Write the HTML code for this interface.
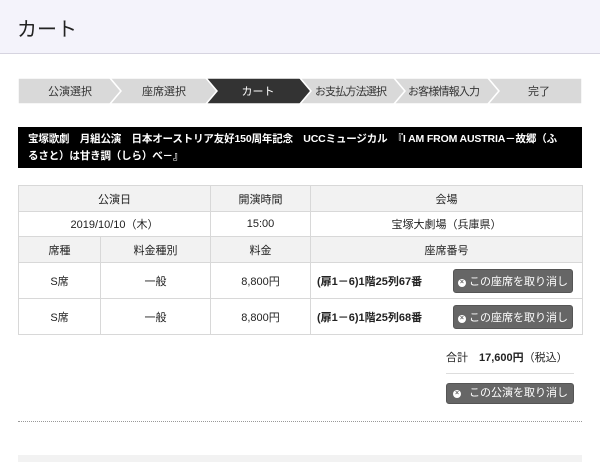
<!DOCTYPE html>
<html><head><meta charset="utf-8"><style>
body{margin:0;width:600px;height:462px;overflow:hidden;background:#fff;font-family:"Liberation Sans","Noto Sans CJK JP",sans-serif;color:#222;font-size:11px}
.hd{position:absolute;left:0;top:0;width:600px;height:53px;background:#f4f3fb;border-bottom:1px solid #d6d4e0}
.hd span{position:absolute;left:17px;top:13px;font-size:20px;color:#222}
.banner{position:absolute;left:18px;top:127px;width:564px;height:41px;background:#000;color:#fff;font-weight:bold;font-size:10.5px;letter-spacing:-0.15px;line-height:17px;box-sizing:border-box;padding:4px 10px}
table{position:absolute;left:18px;top:185px;width:565px;border-collapse:collapse;table-layout:fixed}
td{border:1px solid #d8d8d8;text-align:center;padding:0;font-size:11px}
.g td{background:#f2f2f2}
.btn{display:inline-block;background:#666;color:#fff;border-radius:3px;border:1px solid #555;font-size:11px;white-space:nowrap}
.x{display:inline-block;width:8px;height:8px;border-radius:50%;background:#fff;color:#666;font-size:7px;line-height:8px;text-align:center;vertical-align:1px;font-weight:bold}
.seat{display:flex;justify-content:space-between;align-items:center;padding:0 9px 0 6px;font-weight:bold}
</style></head><body>
<div class="hd"><span>カート</span></div>
<svg style="position:absolute;left:0;top:0" width="600" height="110">
<g stroke="#fff" stroke-width="1.5">
<polygon points="18,78 110,78 121,91 110,104 18,104" fill="#d9d9d9"/>
<polygon points="110,78 206,78 217,91 206,104 110,104 121,91" fill="#d9d9d9"/>
<polygon points="206,78 300,78 311,91 300,104 206,104 217,91" fill="#333"/>
<polygon points="300,78 394,78 405,91 394,104 300,104 311,91" fill="#d9d9d9"/>
<polygon points="394,78 488,78 499,91 488,104 394,104 405,91" fill="#d9d9d9"/>
<polygon points="488,78 582,78 582,104 488,104 499,91" fill="#d9d9d9"/>
</g>
<g font-size="11" text-anchor="middle" fill="#333" font-family="Liberation Sans,Noto Sans CJK JP,sans-serif">
<text x="70" y="95">公演選択</text><text x="164" y="95">座席選択</text><text x="258" y="95" fill="#fff">カート</text><text x="351" y="95" textLength="72">お支払方法選択</text><text x="444" y="95" textLength="72">お客様情報入力</text><text x="539" y="95">完了</text>
</g></svg>
<div class="banner">宝塚歌劇　月組公演　日本オーストリア友好150周年記念　UCCミュージカル　『I AM FROM AUSTRIA－故郷（ふ<br>るさと）は甘き調（しら）べ－』</div>
<table>
<colgroup><col style="width:82px"><col style="width:110px"><col style="width:100px"><col></colgroup>
<tr class="g" style="height:26px"><td colspan="2">公演日</td><td>開演時間</td><td>会場</td></tr>
<tr style="height:25px"><td colspan="2">2019/10/10（木）</td><td>15:00</td><td>宝塚大劇場（兵庫県）</td></tr>
<tr class="g" style="height:26px"><td>席種</td><td>料金種別</td><td>料金</td><td>座席番号</td></tr>
<tr style="height:36px"><td>S席</td><td>一般</td><td>8,800円</td><td style="text-align:left"><div class="seat"><span>(扉1－6)1階25列67番</span><span class="btn" style="padding:3px 4px;font-weight:normal"><span class="x">×</span> この座席を取り消し</span></div></td></tr>
<tr style="height:36px"><td>S席</td><td>一般</td><td>8,800円</td><td style="text-align:left"><div class="seat"><span>(扉1－6)1階25列68番</span><span class="btn" style="padding:3px 4px;font-weight:normal"><span class="x">×</span> この座席を取り消し</span></div></td></tr>
</table>
<div style="position:absolute;left:446px;top:350px;width:128px;height:23px;border-bottom:1px solid #ddd;font-size:11px;line-height:16px">合計　<b>17,600円</b>（税込）</div>
<div class="btn" style="position:absolute;left:446px;top:383px;width:126px;height:19px;line-height:19px"><span class="x" style="margin:0 8px 0 6px">×</span>この公演を取り消し</div>
<div style="position:absolute;left:18px;top:421px;width:564px;border-top:1px dotted #999"></div>
<div style="position:absolute;left:18px;top:455px;width:564px;height:7px;background:#f2f2f2"></div>
</body></html>
